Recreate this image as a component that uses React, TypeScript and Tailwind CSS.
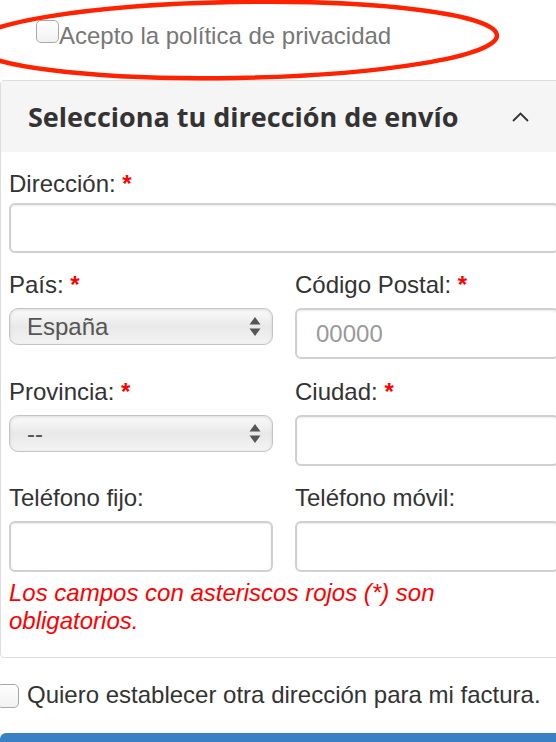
import React from "react";

const sans = { fontFamily: '"Liberation Sans", Arial, sans-serif' };

function Req() {
  return <span className="text-[#ff0000] font-bold"> *</span>;
}

function Label({ children, req }: { children: React.ReactNode; req?: boolean }) {
  return (
    <div className="h-[28px] leading-[28px] text-[24px] text-[#333] mb-[9px] whitespace-nowrap">
      {children}
      {req && <Req />}
    </div>
  );
}

function TextBox({ placeholder }: { placeholder?: string }) {
  return (
    <div className="h-[51px] border-2 border-[#d0d0d0] rounded-[6px] bg-white shadow-[inset_0_1px_2px_rgba(0,0,0,0.08)] flex items-center pl-[19px] text-[24px] text-[#9a9a9a]">
      {placeholder}
    </div>
  );
}

function Select({ value }: { value: string }) {
  return (
    <div className="h-[37px] border border-[#c4c4c4] rounded-[9px] bg-gradient-to-b from-[#fbfbfb] via-[#e9e9e9] to-[#f3f3f3] shadow-[inset_0_1px_3px_rgba(0,0,0,0.12)] flex items-center justify-between pl-[17px] pr-[11px] text-[24px] text-[#555]">
      <span>{value}</span>
      <svg width="12" height="21" viewBox="0 0 12 21">
        <path d="M6 1 L11.5 8.5 L0.5 8.5 Z" fill="#555" />
        <path d="M6 20 L11.5 12.5 L0.5 12.5 Z" fill="#555" />
      </svg>
    </div>
  );
}

export default function App() {
  return (
    <div className="relative w-[556px] h-[742px] overflow-hidden bg-white" style={sans}>
      <div className="w-[568px]">
        {/* privacy checkbox */}
        <div className="h-[80px] pt-[20px] pl-[36px] flex items-start">
          <div className="w-[23px] h-[23px] rounded-[5px] border border-[#a8a8a8] bg-gradient-to-b from-white to-[#f1f1f1] shrink-0" />
          <span className="mt-[2px] h-[28px] leading-[28px] text-[24px] text-[#777]">
            Acepto la política de privacidad
          </span>
        </div>

        {/* panel */}
        <div className="border border-[#dddddd] rounded-[4px]">
          <div className="h-[71px] bg-[#f5f5f5] flex items-center justify-between pl-[27px] pr-[38px]">
            <h3
              className="text-[27px] font-bold text-[#333] leading-none"
              style={{ fontFamily: '"Open Sans", sans-serif' }}
            >
              Selecciona tu dirección de envío
            </h3>
            <svg width="17" height="10" viewBox="0 0 17 10">
              <path d="M1 9 L8.5 1.5 L16 9" fill="none" stroke="#333" strokeWidth="1.8" />
            </svg>
          </div>

          <div className="px-[8px] pt-[18px] pb-[22px]">
            <div className="h-[28px] leading-[28px] text-[24px] text-[#333] mb-[5px]">
              Dirección:
              <Req />
            </div>
            <div className="h-[50px] border-2 border-[#d0d0d0] rounded-[6px] bg-white shadow-[inset_0_1px_2px_rgba(0,0,0,0.08)]" />

            <div className="grid grid-cols-2 gap-x-[22px] items-start">
              <div className="mt-[18px]">
                <Label req>País:</Label>
                <Select value="España" />
              </div>
              <div className="mt-[18px]">
                <Label req>Código Postal:</Label>
                <TextBox placeholder="00000" />
              </div>
              <div className="mt-[19px]">
                <Label req>Provincia:</Label>
                <Select value="--" />
              </div>
              <div className="mt-[19px]">
                <Label req>Ciudad:</Label>
                <TextBox />
              </div>
              <div className="mt-[18px]">
                <Label>Teléfono fijo:</Label>
                <TextBox />
              </div>
              <div className="mt-[18px]">
                <Label>Teléfono móvil:</Label>
                <TextBox />
              </div>
            </div>

            <p className="mt-[7px] text-[24px] leading-[28px] italic text-[#ff0000]">
              Los campos con asteriscos rojos (*) son obligatorios.
            </p>
          </div>
        </div>

        {/* invoice address checkbox */}
        <div className="mt-[23px] flex items-start -ml-[3px]">
          <div className="mt-[3px] w-[22px] h-[24px] rounded-[5px] border border-[#a8a8a8] bg-gradient-to-b from-white to-[#f1f1f1] shrink-0" />
          <span className="ml-[8px] h-[28px] leading-[28px] text-[24px] text-[#333]">
            Quiero establecer otra dirección para mi factura.
          </span>
        </div>

        <div className="mt-[24px] h-[50px] rounded-t-[6px] bg-[#3a80c4]" />
      </div>

      {/* red annotation ellipse */}
      <svg className="absolute left-0 top-0 pointer-events-none" width="556" height="100" viewBox="0 0 556 100">
        <ellipse cx="235" cy="40" rx="262" ry="38" fill="none" stroke="#ff2200" strokeWidth="4.5" transform="rotate(-1 235 40)" />
      </svg>
    </div>
  );
}
